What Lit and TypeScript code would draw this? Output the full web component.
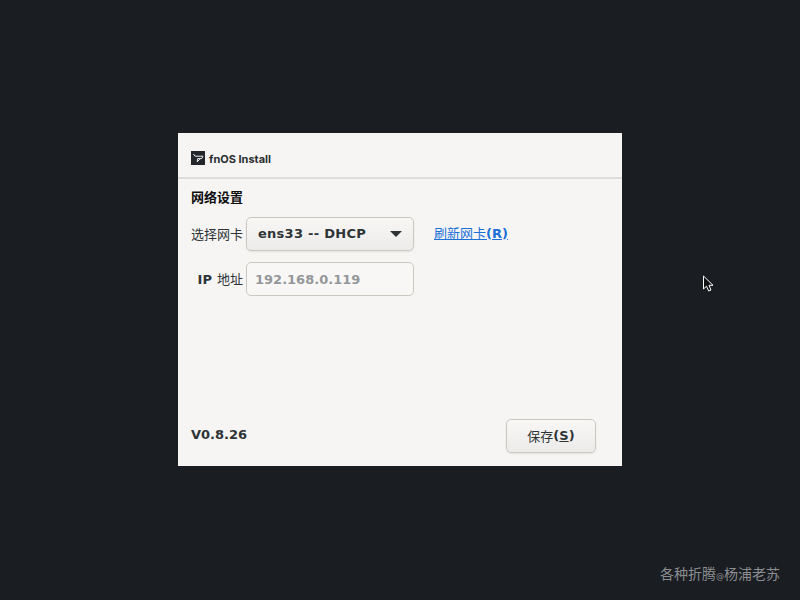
import { LitElement, html, css } from "lit";
import { customElement } from "lit/decorators.js";

@customElement("app-root")
export class AppRoot extends LitElement {
  static styles = css`
    :host { display: block; position: relative; width: 800px; height: 600px; background: #1a1d22; overflow: hidden;
      font-family: "DejaVu Sans", "Noto Sans CJK SC", sans-serif; color: #2e3436; }
    .window { position: absolute; left: 178px; top: 133px; width: 444px; height: 333px; background: #f6f5f4;
      display: flex; flex-direction: column; box-sizing: border-box; }
    .header { height: 46px; box-sizing: border-box; border-bottom: 2px solid #dedddb; display: flex; align-items: center;
      gap: 4px; padding: 7px 0 0 13px; font: 700 11px Inter, "Noto Sans", sans-serif; color: #2b2e30; }
    .header svg { display: block; margin-top: -1px; }
    .body { flex: 1; display: flex; flex-direction: column; padding: 0 26px 13px 13px; }
    .section { font: 700 13px/1 "Noto Sans CJK SC", sans-serif; color: #0e0e0e; margin-top: 11px; height: 14px; }
    .row { display: flex; align-items: center; }
    .row.net { margin-top: 13px; height: 34px; }
    .row.ip { margin-top: 11px; height: 34px; }
    .label { width: 52px; flex: none; margin-right: 3px; text-align: right; font-size: 13px; white-space: nowrap; line-height: 16px; margin-top: -1px; }
    .row.ip .label { margin-top: 1px; }
    .label b { font-weight: 700; font-size: 13px; margin-right: 5px; }
    .cjk { font-family: "Noto Sans CJK SC", sans-serif; }
    .combo { width: 168px; height: 34px; box-sizing: border-box; border: 1px solid #cdc7c2; border-radius: 5px;
      background: linear-gradient(#f8f7f6, #edebe9); box-shadow: 0 1px 2px rgba(0,0,0,.08);
      display: flex; align-items: center; justify-content: space-between; padding: 0 11px 2px 11px;
      font: 700 13px "DejaVu Sans", sans-serif; letter-spacing: .27px; color: #2e3436; }
    .arrow { width: 0; height: 0; border-left: 6.5px solid transparent; border-right: 6.5px solid transparent; border-top: 6.5px solid #2e3436; margin-top: 2px; }
    .link { margin-left: 20px; color: #1c71d8; font-size: 13px; text-decoration: underline; line-height: 16px; margin-top: -2px; }
    .link b { font: 700 13px "DejaVu Sans", sans-serif; }
    .entry { width: 168px; height: 34px; box-sizing: border-box; border: 1px solid #cdc7c2; border-radius: 5px; background: #f8f7f6;
      display: flex; align-items: center; padding: 0 8px; font: 700 13px "DejaVu Sans", sans-serif; color: #94979a; }
    .footer { margin-top: auto; display: flex; align-items: center; justify-content: space-between; }
    .ver { font: 700 13px "DejaVu Sans", sans-serif; color: #2e3436; margin-top: -4px; }
    .btn { width: 90px; height: 34px; box-sizing: border-box; border: 1px solid #cdc7c2; border-radius: 5px;
      background: linear-gradient(#f8f7f6, #edebe9); box-shadow: 0 1px 2px rgba(0,0,0,.08);
      display: flex; align-items: center; justify-content: center; font-size: 13px; color: #2e3436; padding-bottom: 2px; }
    .btn b { font: 700 13px "DejaVu Sans", sans-serif; }
    .watermark { position: absolute; left: 660px; top: 563px; font: 400 14px "Noto Sans CJK SC", sans-serif; color: #8b8d90; white-space: nowrap; }
    .watermark i { font: normal 8px "DejaVu Sans", sans-serif; }
    .cursor { position: absolute; left: 702px; top: 275px; display: block; }
  `;

  render() {
    return html`
      <div class="window">
        <div class="header">
          <svg width="14" height="14" viewBox="0 0 14 14">
            <rect width="14" height="14" fill="#23272b"/>
            <path d="M2.5 3L4 5.2H12L10.7 7.6H6.7L6.2 10.8L9.5 7.6" fill="none" stroke="#eeeeee" stroke-width="1"/>
          </svg>
          <span>fnOS Install</span>
        </div>
        <div class="body">
          <div class="section">网络设置</div>
          <div class="row net">
            <div class="label cjk">选择网卡</div>
            <div class="combo"><span>ens33 -- DHCP</span><span class="arrow"></span></div>
            <div class="link"><span class="cjk">刷新网卡</span><b>(R)</b></div>
          </div>
          <div class="row ip">
            <div class="label"><b>IP</b><span class="cjk">地址</span></div>
            <div class="entry">192.168.0.119</div>
          </div>
          <div class="footer">
            <div class="ver">V0.8.26</div>
            <div class="btn"><span class="cjk">保存</span><b>(<u>S</u>)</b></div>
          </div>
        </div>
      </div>
      <div class="watermark">各种折腾<i>@</i>杨浦老苏</div>
      <svg class="cursor" width="13" height="18" viewBox="0 0 13 18">
        <path d="M1.5 1V14L4.5 11.2L6.7 16L9 15L7 10.3H11Z" fill="#111" stroke="#fff" stroke-width="1"/>
      </svg>
    `;
  }
}
